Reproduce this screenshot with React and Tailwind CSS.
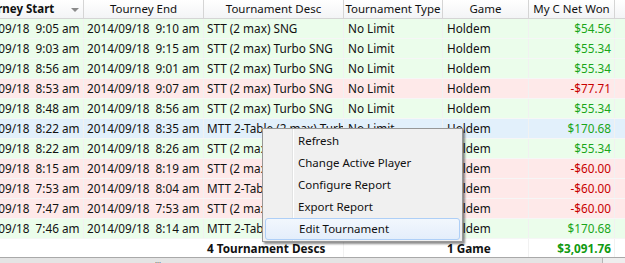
const cols = [
  { w: 'w-[120px]', align: 'text-left' },
  { w: 'w-[120px]', align: 'text-left' },
  { w: 'w-[140px]', align: 'text-left' },
  { w: 'w-[99px]', align: 'text-left' },
  { w: 'w-[86px]', align: 'text-left' },
  { w: 'w-[86px]', align: 'text-right' },
]

const rows = [
  ['9:05 am', '9:10 am', 'STT (2 max) SNG', '$54.56', 'g'],
  ['9:03 am', '9:15 am', 'STT (2 max) Turbo SNG', '$55.34', 'g'],
  ['8:56 am', '9:01 am', 'STT (2 max) Turbo SNG', '$55.34', 'g'],
  ['8:53 am', '9:07 am', 'STT (2 max) Turbo SNG', '-$77.71', 'r'],
  ['8:48 am', '8:56 am', 'STT (2 max) Turbo SNG', '$55.34', 'g'],
  ['8:22 am', '8:35 am', 'MTT 2-Table (2 max) Turbo', '$170.68', 'b'],
  ['8:22 am', '8:26 am', 'STT (2 max) Turbo SNG', '$55.34', 'g'],
  ['8:15 am', '8:19 am', 'STT (2 max) SNG', '-$60.00', 'r'],
  ['7:53 am', '8:04 am', 'MTT 2-Table (2 max) Turbo', '-$60.00', 'r'],
  ['7:47 am', '7:53 am', 'STT (2 max) SNG', '-$60.00', 'r'],
  ['7:46 am', '8:14 am', 'MTT 2-Table (2 max) Turbo', '$170.68', 'g'],
]

const rowBg = { g: 'bg-[#ebfdeb]', r: 'bg-[#fee9e9]', b: 'bg-[#e2f0fb]' }

const headers = ['Tourney Start', 'Tourney End', 'Tournament Desc', 'Tournament Type', 'Game', 'My C Net Won']

const menuItems = ['Refresh', 'Change Active Player', 'Configure Report', 'Export Report', 'Edit Tournament']

function Cell({ i, children, className = '' }) {
  return (
    <div
      className={`${cols[i].w} ${cols[i].align} shrink-0 overflow-hidden whitespace-pre px-[3px] border-r border-[#f1f1f1] ${className}`}
    >
      {children}
    </div>
  )
}

export default function App() {
  return (
    <div className="relative h-[263px] w-[625px] overflow-hidden bg-white text-[11.5px] text-[#111] font-['Noto_Sans',sans-serif]">
      <div className="ml-[-36px] w-[700px]">
        <div className="flex h-[19px] items-center border-b border-[#d5d5d5] bg-gradient-to-b from-white to-[#f3f4f6] leading-[18px]">
          {headers.map((h, i) => (
            <div
              key={h}
              className={`${cols[i].w} relative shrink-0 whitespace-nowrap border-r border-[#d5d5d5] text-center ${i === 0 ? 'pr-[16px] font-bold' : ''}`}
            >
              {h}
              {i === 0 && (
                <span className="absolute right-[4px] top-[8px] h-0 w-0 border-x-[4px] border-t-[4px] border-x-transparent border-t-[#8a8a8a]" />
              )}
            </div>
          ))}
          <div className="flex-1" />
        </div>

        {rows.map(([s, e, desc, won, k], idx) => (
          <div key={idx} className={`flex h-[20px] items-center border-b border-[#f6f6f6] text-[11.75px] leading-[19px] ${rowBg[k]}`}>
            <Cell i={0}>{`2014/09/18  ${s}`}</Cell>
            <Cell i={1}>{`2014/09/18  ${e}`}</Cell>
            <Cell i={2}>{desc}</Cell>
            <Cell i={3} className="pl-[4px]">No Limit</Cell>
            <Cell i={4} className="pl-[4px]">Holdem</Cell>
            <Cell i={5} className={won.startsWith('-') ? 'text-[#c80000]' : 'text-[#1aa61a]'}>{won}</Cell>
            <div className="flex-1" />
          </div>
        ))}

        <div className="flex h-[19px] items-center border-b border-[#a9a9a9] text-[11.75px] font-bold leading-[18px]">
          <Cell i={0}>{''}</Cell>
          <Cell i={1}>{''}</Cell>
          <Cell i={2}>4 Tournament Descs</Cell>
          <Cell i={3}>{''}</Cell>
          <Cell i={4} className="pl-[4px]">1 Game</Cell>
          <Cell i={5} className="text-[#109a10]">$3,091.76</Cell>
          <div className="flex-1" />
        </div>
      </div>

      <div className="flex h-[6px] bg-[#eeeeee]">
        <div className="relative w-[603px] border-r border-[#b5b5b5] bg-[#e4e4e4]">
          <span className="absolute left-[155px] top-[1px] text-[6px] leading-[6px] tracking-[1px] text-[#444]">⋯</span>
        </div>
      </div>

      <div className="absolute left-[262px] top-[128px] w-[201px] border border-[#979797] bg-[#f0f0f0] py-[1px] shadow-[2px_2px_2px_rgba(0,0,0,0.45)]">
        <div className="absolute bottom-0 left-[29px] top-0 w-[2px] border-l border-[#e2e3e3] bg-white" />
        {menuItems.map((m, i) => (
          <div
            key={m}
            className={`relative mx-[2px] flex h-[22px] items-center rounded-[3px] pl-[33px] leading-[20px] ${
              i === menuItems.length - 1
                ? 'border border-[#aecff7] bg-gradient-to-b from-[#f2f7fd] to-[#e4eefb] pl-[32px]'
                : ''
            }`}
          >
            {m}
          </div>
        ))}
      </div>
    </div>
  )
}
